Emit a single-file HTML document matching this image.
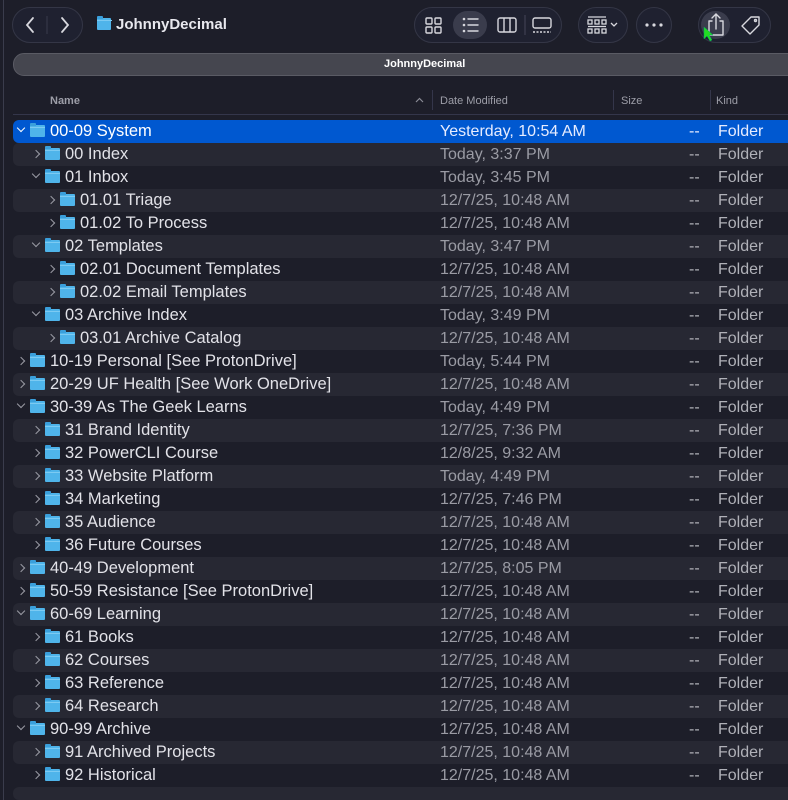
<!DOCTYPE html>
<html><head><meta charset="utf-8"><style>
*{margin:0;padding:0;box-sizing:border-box}
html,body{width:788px;height:800px;overflow:hidden}
body{background:#1d1e29;font-family:"Liberation Sans",sans-serif;position:relative;color:#e2e2e8}
.pill{position:absolute;border:1px solid #343646;border-radius:18px;background:#1f2130}
.side{position:absolute;left:0;top:0;width:4px;height:800px;border-right:1px solid #3a3c4c}
.title{position:absolute;left:116px;top:16px;font-size:15px;font-weight:bold;color:#e8e8ee}
.path{position:absolute;left:13px;top:53px;width:790px;height:23px;border-radius:11px;background:#45464f;border:1px solid #5a5b64;color:#fff;font-size:11px;font-weight:bold;line-height:21px}
.path span{position:absolute;left:370px}
.hdr{position:absolute;top:95px;font-size:11px;font-weight:bold;color:#9d9ea8}
.sep{position:absolute;top:90px;width:1px;height:20px;background:#34364a}
.hline{position:absolute;left:13px;right:0;top:114px;height:1px;background:#34364a}
.row{position:absolute;left:13px;right:0;height:23px;font-size:16px;line-height:23px}
.row.alt{background:#272833;border-radius:6px 0 0 6px}
.row.sel{background:#0058d0;border-radius:6px 0 0 6px;color:#fff}
.row .n{position:absolute;top:0;white-space:nowrap;font-size:16.5px}
.row .d{position:absolute;left:427px;top:0;color:#9a9ba4}
.row .s{position:absolute;left:676px;top:0;color:#b0b1b8}
.row .k{position:absolute;left:705px;top:0;color:#b0b1b8}
.row.sel .d,.row.sel .s,.row.sel .k{color:#e6ecff}
.ch{position:absolute;top:7px;width:6px;height:6px;border-right:1.5px solid #9a9ba4;border-bottom:1.5px solid #9a9ba4}
.ch.r{transform:rotate(-45deg);top:8px}
.ch.dn{transform:rotate(45deg);top:5px}
.sel .ch{border-color:#fff}
.f{position:absolute;top:5px;width:15px;height:12px;background:#4fb4ea;border-radius:1px}
.f:before{content:"";position:absolute;left:0;top:-2px;width:6px;height:3px;background:#3a9fdb;border-radius:1px 1px 0 0}
.f:after{content:"";position:absolute;left:0;top:2px;width:15px;height:1px;background:#7ccaf2}
</style></head><body>
<div class="side"></div>
<div class="pill" style="left:12px;top:7px;width:71px;height:36px"></div>
<svg style="position:absolute;left:12px;top:7px" width="71" height="36"><path d="M21 11 L15 18 L21 25" stroke="#d8d8de" stroke-width="1.8" fill="none" stroke-linecap="round"/><line x1="35" y1="9" x2="35" y2="27" stroke="#3a3c4c"/><path d="M50 11 L56 18 L50 25" stroke="#d8d8de" stroke-width="1.8" fill="none" stroke-linecap="round"/></svg>
<div class="f" style="left:97px;top:18px;width:14px;height:12px"></div>
<div class="title">JohnnyDecimal</div>
<div class="pill" style="left:414px;top:7px;width:148px;height:36px"></div>
<div style="position:absolute;left:453px;top:11px;width:34px;height:28px;border-radius:14px;background:#3a3c4c"></div>
<svg style="position:absolute;left:414px;top:7px" width="148" height="36" fill="none" stroke="#d8d8de" stroke-width="1.4"><rect x="12" y="11" width="6" height="6" rx="1"/><rect x="21" y="11" width="6" height="6" rx="1"/><rect x="12" y="20" width="6" height="6" rx="1"/><rect x="21" y="20" width="6" height="6" rx="1"/><g stroke-linecap="round"><circle cx="50" cy="12" r=".6"/><circle cx="50" cy="18" r=".6"/><circle cx="50" cy="24" r=".6"/><line x1="54" y1="12" x2="64" y2="12"/><line x1="54" y1="18" x2="64" y2="18"/><line x1="54" y1="24" x2="64" y2="24"/></g><rect x="84" y="11" width="18" height="14" rx="2"/><line x1="90" y1="11" x2="90" y2="25"/><line x1="96" y1="11" x2="96" y2="25"/><line x1="111" y1="8" x2="111" y2="28" stroke="#3a3c4c"/><rect x="119" y="11" width="18" height="10" rx="2"/><line x1="119" y1="25" x2="137" y2="25" stroke-dasharray="2 1.5"/></svg>
<div class="pill" style="left:578px;top:7px;width:50px;height:36px"></div>
<svg style="position:absolute;left:578px;top:7px" width="50" height="36" fill="none" stroke="#d8d8de" stroke-width="1.3"><line x1="10" y1="10" x2="28" y2="10"/><rect x="10" y="13" width="4" height="4"/><rect x="17" y="13" width="4" height="4"/><rect x="24" y="13" width="4" height="4"/><line x1="10" y1="19.5" x2="28" y2="19.5"/><rect x="10" y="22" width="4" height="4"/><rect x="17" y="22" width="4" height="4"/><rect x="24" y="22" width="4" height="4"/><path d="M33 16 L36 19 L39 16"/></svg>
<div class="pill" style="left:636px;top:7px;width:36px;height:36px"></div>
<svg style="position:absolute;left:636px;top:7px" width="36" height="36" fill="#d8d8de"><circle cx="11" cy="18" r="1.6"/><circle cx="18" cy="18" r="1.6"/><circle cx="25" cy="18" r="1.6"/></svg>
<div class="pill" style="left:698px;top:7px;width:73px;height:36px"></div>
<div style="position:absolute;left:701px;top:11px;width:29px;height:28px;border-radius:14px;background:#3a3c4c"></div>
<svg style="position:absolute;left:698px;top:7px" width="73" height="36" fill="none" stroke="#d8d8de" stroke-width="1.4" stroke-linecap="round" stroke-linejoin="round"><path d="M14 14 H11 V28 H25 V14 H22"/><path d="M18 22 V7 M14 11 L18 7 L22 11"/><path d="M44 19 L53 10 H61 V18 L52 27 Z"/><circle cx="57.5" cy="13.5" r="1"/></svg>
<svg style="position:absolute;left:703px;top:26px" width="12" height="16"><path d="M1 1 L1 13 L4 10 L7 15 L9 14 L6 9 L10 9 Z" fill="#22dd22" stroke="#0a6" stroke-width=".5"/></svg>
<div class="path"><span>JohnnyDecimal</span></div>
<div class="hdr" style="left:50px">Name</div>
<svg style="position:absolute;left:415px;top:97px" width="9" height="6"><path d="M1 5 L4.5 1.5 L8 5" stroke="#8a8b95" stroke-width="1.2" fill="none"/></svg>
<div class="sep" style="left:432px"></div><div class="hdr" style="left:440px;font-weight:normal">Date Modified</div>
<div class="sep" style="left:613px"></div><div class="hdr" style="left:621px;font-weight:normal">Size</div>
<div class="sep" style="left:710px"></div><div class="hdr" style="left:716px;font-weight:normal">Kind</div>
<div class="hline"></div>

<div class="row sel" style="top:120px"><i class="ch dn" style="left:5px"></i><i class="f" style="left:17px"></i><span class="n" style="left:37px">00-09 System</span><span class="d">Yesterday, 10:54 AM</span><span class="s">--</span><span class="k">Folder</span></div>
<div class="row alt" style="top:143px"><i class="ch r" style="left:20px"></i><i class="f" style="left:32px"></i><span class="n" style="left:52px">00 Index</span><span class="d">Today, 3:37 PM</span><span class="s">--</span><span class="k">Folder</span></div>
<div class="row" style="top:166px"><i class="ch dn" style="left:20px"></i><i class="f" style="left:32px"></i><span class="n" style="left:52px">01 Inbox</span><span class="d">Today, 3:45 PM</span><span class="s">--</span><span class="k">Folder</span></div>
<div class="row alt" style="top:189px"><i class="ch r" style="left:35px"></i><i class="f" style="left:47px"></i><span class="n" style="left:67px">01.01 Triage</span><span class="d">12/7/25, 10:48 AM</span><span class="s">--</span><span class="k">Folder</span></div>
<div class="row" style="top:212px"><i class="ch r" style="left:35px"></i><i class="f" style="left:47px"></i><span class="n" style="left:67px">01.02 To Process</span><span class="d">12/7/25, 10:48 AM</span><span class="s">--</span><span class="k">Folder</span></div>
<div class="row alt" style="top:235px"><i class="ch dn" style="left:20px"></i><i class="f" style="left:32px"></i><span class="n" style="left:52px">02 Templates</span><span class="d">Today, 3:47 PM</span><span class="s">--</span><span class="k">Folder</span></div>
<div class="row" style="top:258px"><i class="ch r" style="left:35px"></i><i class="f" style="left:47px"></i><span class="n" style="left:67px">02.01 Document Templates</span><span class="d">12/7/25, 10:48 AM</span><span class="s">--</span><span class="k">Folder</span></div>
<div class="row alt" style="top:281px"><i class="ch r" style="left:35px"></i><i class="f" style="left:47px"></i><span class="n" style="left:67px">02.02 Email Templates</span><span class="d">12/7/25, 10:48 AM</span><span class="s">--</span><span class="k">Folder</span></div>
<div class="row" style="top:304px"><i class="ch dn" style="left:20px"></i><i class="f" style="left:32px"></i><span class="n" style="left:52px">03 Archive Index</span><span class="d">Today, 3:49 PM</span><span class="s">--</span><span class="k">Folder</span></div>
<div class="row alt" style="top:327px"><i class="ch r" style="left:35px"></i><i class="f" style="left:47px"></i><span class="n" style="left:67px">03.01 Archive Catalog</span><span class="d">12/7/25, 10:48 AM</span><span class="s">--</span><span class="k">Folder</span></div>
<div class="row" style="top:350px"><i class="ch r" style="left:5px"></i><i class="f" style="left:17px"></i><span class="n" style="left:37px">10-19 Personal [See ProtonDrive]</span><span class="d">Today, 5:44 PM</span><span class="s">--</span><span class="k">Folder</span></div>
<div class="row alt" style="top:373px"><i class="ch r" style="left:5px"></i><i class="f" style="left:17px"></i><span class="n" style="left:37px">20-29 UF Health [See Work OneDrive]</span><span class="d">12/7/25, 10:48 AM</span><span class="s">--</span><span class="k">Folder</span></div>
<div class="row" style="top:396px"><i class="ch dn" style="left:5px"></i><i class="f" style="left:17px"></i><span class="n" style="left:37px">30-39 As The Geek Learns</span><span class="d">Today, 4:49 PM</span><span class="s">--</span><span class="k">Folder</span></div>
<div class="row alt" style="top:419px"><i class="ch r" style="left:20px"></i><i class="f" style="left:32px"></i><span class="n" style="left:52px">31 Brand Identity</span><span class="d">12/7/25, 7:36 PM</span><span class="s">--</span><span class="k">Folder</span></div>
<div class="row" style="top:442px"><i class="ch r" style="left:20px"></i><i class="f" style="left:32px"></i><span class="n" style="left:52px">32 PowerCLI Course</span><span class="d">12/8/25, 9:32 AM</span><span class="s">--</span><span class="k">Folder</span></div>
<div class="row alt" style="top:465px"><i class="ch r" style="left:20px"></i><i class="f" style="left:32px"></i><span class="n" style="left:52px">33 Website Platform</span><span class="d">Today, 4:49 PM</span><span class="s">--</span><span class="k">Folder</span></div>
<div class="row" style="top:488px"><i class="ch r" style="left:20px"></i><i class="f" style="left:32px"></i><span class="n" style="left:52px">34 Marketing</span><span class="d">12/7/25, 7:46 PM</span><span class="s">--</span><span class="k">Folder</span></div>
<div class="row alt" style="top:511px"><i class="ch r" style="left:20px"></i><i class="f" style="left:32px"></i><span class="n" style="left:52px">35 Audience</span><span class="d">12/7/25, 10:48 AM</span><span class="s">--</span><span class="k">Folder</span></div>
<div class="row" style="top:534px"><i class="ch r" style="left:20px"></i><i class="f" style="left:32px"></i><span class="n" style="left:52px">36 Future Courses</span><span class="d">12/7/25, 10:48 AM</span><span class="s">--</span><span class="k">Folder</span></div>
<div class="row alt" style="top:557px"><i class="ch r" style="left:5px"></i><i class="f" style="left:17px"></i><span class="n" style="left:37px">40-49 Development</span><span class="d">12/7/25, 8:05 PM</span><span class="s">--</span><span class="k">Folder</span></div>
<div class="row" style="top:580px"><i class="ch r" style="left:5px"></i><i class="f" style="left:17px"></i><span class="n" style="left:37px">50-59 Resistance [See ProtonDrive]</span><span class="d">12/7/25, 10:48 AM</span><span class="s">--</span><span class="k">Folder</span></div>
<div class="row alt" style="top:603px"><i class="ch dn" style="left:5px"></i><i class="f" style="left:17px"></i><span class="n" style="left:37px">60-69 Learning</span><span class="d">12/7/25, 10:48 AM</span><span class="s">--</span><span class="k">Folder</span></div>
<div class="row" style="top:626px"><i class="ch r" style="left:20px"></i><i class="f" style="left:32px"></i><span class="n" style="left:52px">61 Books</span><span class="d">12/7/25, 10:48 AM</span><span class="s">--</span><span class="k">Folder</span></div>
<div class="row alt" style="top:649px"><i class="ch r" style="left:20px"></i><i class="f" style="left:32px"></i><span class="n" style="left:52px">62 Courses</span><span class="d">12/7/25, 10:48 AM</span><span class="s">--</span><span class="k">Folder</span></div>
<div class="row" style="top:672px"><i class="ch r" style="left:20px"></i><i class="f" style="left:32px"></i><span class="n" style="left:52px">63 Reference</span><span class="d">12/7/25, 10:48 AM</span><span class="s">--</span><span class="k">Folder</span></div>
<div class="row alt" style="top:695px"><i class="ch r" style="left:20px"></i><i class="f" style="left:32px"></i><span class="n" style="left:52px">64 Research</span><span class="d">12/7/25, 10:48 AM</span><span class="s">--</span><span class="k">Folder</span></div>
<div class="row" style="top:718px"><i class="ch dn" style="left:5px"></i><i class="f" style="left:17px"></i><span class="n" style="left:37px">90-99 Archive</span><span class="d">12/7/25, 10:48 AM</span><span class="s">--</span><span class="k">Folder</span></div>
<div class="row alt" style="top:741px"><i class="ch r" style="left:20px"></i><i class="f" style="left:32px"></i><span class="n" style="left:52px">91 Archived Projects</span><span class="d">12/7/25, 10:48 AM</span><span class="s">--</span><span class="k">Folder</span></div>
<div class="row" style="top:764px"><i class="ch r" style="left:20px"></i><i class="f" style="left:32px"></i><span class="n" style="left:52px">92 Historical</span><span class="d">12/7/25, 10:48 AM</span><span class="s">--</span><span class="k">Folder</span></div>
<div class="row alt" style="top:787px;height:13px"></div>
</body></html>
